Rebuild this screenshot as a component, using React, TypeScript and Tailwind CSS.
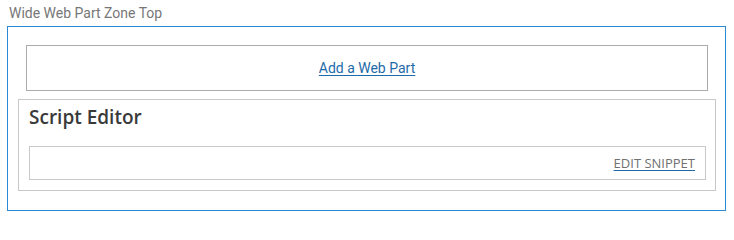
export default function App() {
  return (
    <div className="w-[734px] h-[219px] bg-white overflow-hidden">
      <div className="pl-[9px] pt-[4px] h-[26px] text-[14px] leading-[18px] text-[#777777] font-['Roboto',sans-serif]">
        Wide Web Part Zone Top
      </div>

      <div className="ml-[7px] w-[719px] h-[185px] border border-[#2b88d2] flex flex-col">
        <div className="mt-[18px] ml-[18px] w-[682px] h-[46px] border border-[#ababab] flex items-center justify-center">
          <a
            href="#"
            className="text-[14px] leading-[18px] text-[#1e6aa8] underline underline-offset-2 font-['Roboto',sans-serif]"
          >
            Add a Web Part
          </a>
        </div>

        <div className="mt-[8px] ml-[10px] w-[698px] h-[92px] border border-[#c8c8c8] px-[10px] flex flex-col">
          <h2 className="h-[46px] pt-[4px] text-[19px] leading-[26px] font-semibold text-[#3a3a3a] font-['Open_Sans',sans-serif]">
            Script Editor
          </h2>
          <div className="w-[677px] h-[34px] border border-[#c8c8c8] flex items-center justify-end pr-[10px]">
            <a
              href="#"
              className="text-[13px] leading-[16px] text-[#707070] underline decoration-[#1e6aa8] underline-offset-2 font-['Open_Sans',sans-serif]"
            >
              EDIT SNIPPET
            </a>
          </div>
        </div>
      </div>
    </div>
  );
}
